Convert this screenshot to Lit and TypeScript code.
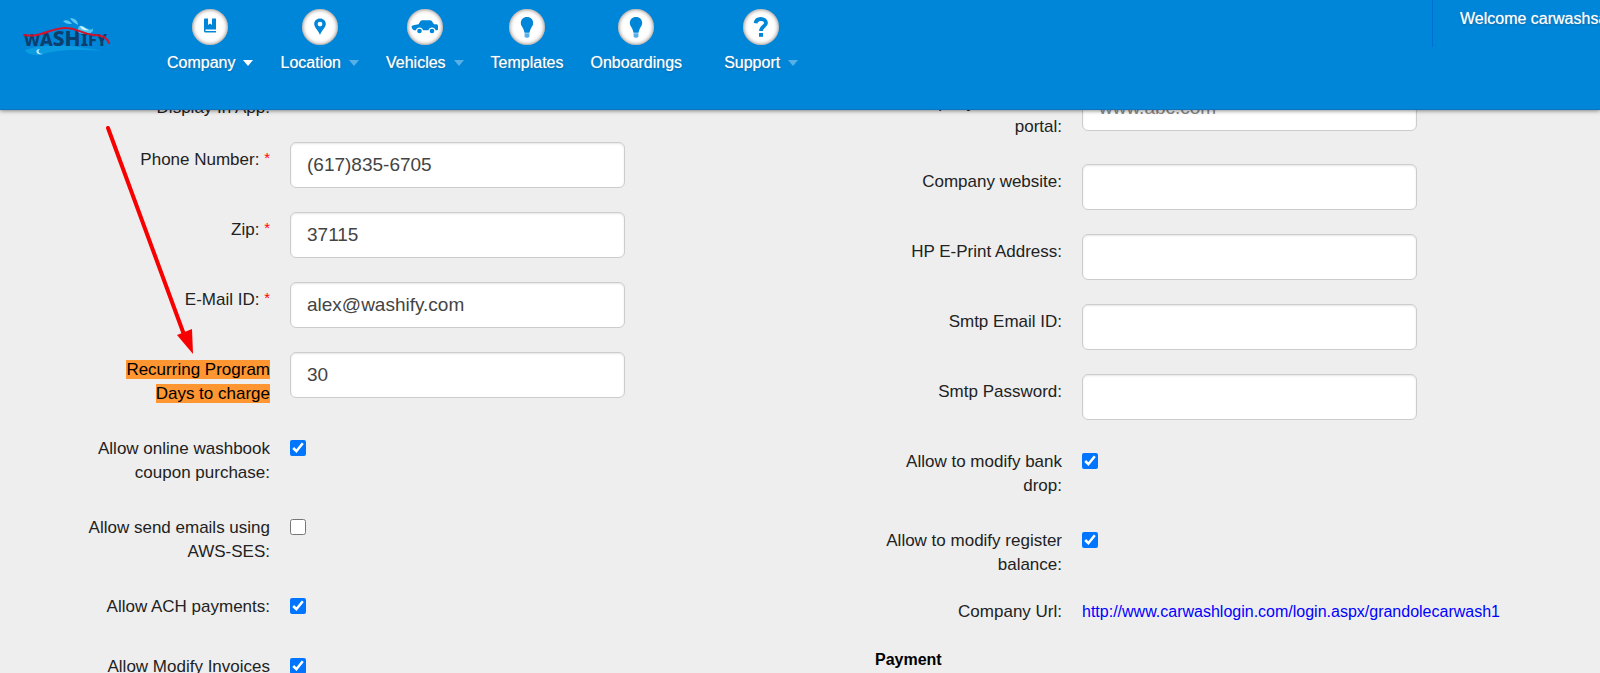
import { LitElement, html, css, svg, nothing } from "lit";
import { customElement } from "lit/decorators.js";

type Row = {
  id: string;
  label: string;
  kind: "text" | "password" | "check" | "link" | "static";
  value?: string;
  placeholder?: string;
  checked?: boolean;
  required?: boolean;
  mark?: boolean;
};

const LEFT: Row[] = [
  { id: "display", label: "Display In App:", kind: "static" },
  { id: "phone", label: "Phone Number:", kind: "text", value: "(617)835-6705", required: true },
  { id: "zip", label: "Zip:", kind: "text", value: "37115", required: true },
  { id: "email", label: "E-Mail ID:", kind: "text", value: "alex@washify.com", required: true },
  { id: "days", label: "Recurring Program Days to charge", kind: "text", value: "30", mark: true },
  { id: "washbook", label: "Allow online washbook coupon purchase:", kind: "check", checked: true },
  { id: "ses", label: "Allow send emails using AWS-SES:", kind: "check" },
  { id: "ach", label: "Allow ACH payments:", kind: "check", checked: true },
  { id: "invoices", label: "Allow Modify Invoices", kind: "check", checked: true },
];

const RIGHT: Row[] = [
  { id: "portal", label: "Company website for portal:", kind: "text", placeholder: "www.abc.com" },
  { id: "website", label: "Company website:", kind: "text" },
  { id: "eprint", label: "HP E-Print Address:", kind: "text" },
  { id: "smtp-id", label: "Smtp Email ID:", kind: "text" },
  { id: "smtp-pw", label: "Smtp Password:", kind: "password" },
  { id: "bank", label: "Allow to modify bank drop:", kind: "check", checked: true },
  { id: "register", label: "Allow to modify register balance:", kind: "check", checked: true },
  { id: "url", label: "Company Url:", kind: "link", value: "http://www.carwashlogin.com/login.aspx/grandolecarwash1" },
];

const bulb = svg`<path d="M18 8c-3.800 0-6.200 2.600-6.200 6 0 2.300 1.200 3.600 2.200 5.200.8 1.300 1.200 2.900 1.500 4.600h5c.3-1.700.7-3.300 1.500-4.600 1-1.600 2.200-2.900 2.200-5.200 0-3.400-2.400-6-6.200-6z"/><path opacity=".65" d="M15.600 24.300h4.800v3.200l-1.200 1.300h-2.400l-1.200-1.300z"/>`;

const NAV = [
  {
    label: "Company",
    caret: "on",
    icon: svg`<path d="M12 10.500q0-1 1-1h3v6.500l2-1.600 2 1.600v-6.500h4v11h-10.500v1.500h10.500v1.500h-10.500q-1.500 0-1.500-1.500z"/>`,
  },
  {
    label: "Location",
    caret: "off",
    icon: svg`<path fill-rule="evenodd" d="M18 9.500c-3.400 0-5.800 2.400-5.800 5.600 0 3.600 4 6 5.800 10.900 1.800-4.900 5.800-7.300 5.800-10.900 0-3.200-2.400-5.600-5.800-5.600zm0 3.200a2.400 2.400 0 1 1 0 4.800 2.400 2.400 0 0 1 0-4.800z"/>`,
  },
  {
    label: "Vehicles",
    caret: "off",
    icon: svg`<path d="M4.500 17.500q.5-1.200 3-1.600l4-.7 2-3.200q.6-.8 1.800-.8h7.700q1.300 0 2 1l2 3h2.500q1.500.3 1.500 1.800v3.300q0 1-1.200 1h-1.300a3.600 3.600 0 0 0-7 0h-5.500a3.600 3.600 0 0 0-7 0h-2q-2.200-.6-2.500-3.800z"/><circle cx="12.500" cy="22" r="2.300"/><circle cx="25" cy="22" r="2.300"/>`,
  },
  { label: "Templates", caret: "", icon: bulb },
  { label: "Onboardings", caret: "", icon: bulb },
  {
    label: "Support",
    caret: "off",
    icon: svg`<path fill="none" stroke="#0086d8" stroke-width="3.800" d="M12.600 14.300c.3-2.900 2.500-4.300 5.200-4.300 3 0 5.200 1.600 5.200 4 0 3.500-4.900 3.300-5 8"/><rect x="16" y="24" width="4" height="3.800"/>`,
  },
];

@customElement("app-root")
export class AppRoot extends LitElement {
  static styles = css`
    :host {
      display: block;
      position: relative;
      height: 100vh;
      overflow: hidden;
      background: #eee;
      color: #222;
      font-family: "Liberation Sans", Arial, sans-serif;
      font-size: 17px;
      line-height: 24px;
    }
    * {
      box-sizing: border-box;
    }
    .header {
      position: absolute;
      inset: 0 0 auto 0;
      z-index: 2;
      display: flex;
      align-items: flex-start;
      height: 110px;
      background: #0086d8;
      border-bottom: 1px solid #0a74c0;
      box-shadow: 0 1px 4px rgba(0, 0, 0, 0.45);
      color: #fff;
      font-size: 16px;
      text-shadow: 0 0 1px rgba(255, 255, 255, 0.6), 0 1px 2px rgba(0, 0, 0, 0.3);
    }
    .logo {
      flex: none;
      margin: 14px 41px 0 20px;
      width: 93px;
      text-shadow: none;
    }
    .nav {
      display: flex;
      flex: 1;
      gap: 1px;
    }
    .item {
      display: flex;
      flex-direction: column;
      align-items: center;
      padding: 9px 13px 0;
      color: inherit;
      text-decoration: none;
    }
    .item:last-child {
      margin-left: 15px;
    }
    .disc {
      width: 36px;
      height: 36px;
      border-radius: 50%;
      background: #fff;
      box-shadow: inset 0 0 4px rgba(60, 40, 30, 0.7);
      fill: #0086d8;
    }
    .disc svg,
    .logo svg {
      display: block;
    }
    .name {
      display: flex;
      align-items: center;
      gap: 8px;
      margin-top: 6px;
    }
    .caret {
      border: 5px solid transparent;
      border-top: 6px solid #fff;
      border-bottom: 0;
    }
    .off {
      opacity: 0.35;
    }
    .user {
      width: 168px;
      height: 47px;
      padding: 7px 0 0 27px;
      border-left: 1px solid #0070d0;
      overflow: hidden;
      white-space: nowrap;
    }
    .main {
      display: grid;
      grid-template-columns: 1fr 1fr;
      padding: 85px 8px 0;
    }
    .col {
      display: flex;
      flex-direction: column;
      gap: 24px;
      padding: 0 2px 0 75px;
    }
    .row {
      display: grid;
      grid-template-columns: 187px minmax(0, 1fr);
      column-gap: 20px;
      align-items: start;
    }
    .label {
      padding: 6px 0 1px;
      text-align: right;
    }
    .static {
      margin-bottom: -2px;
    }
    .static .label {
      padding: 11px 0 0;
    }
    .check {
      min-height: 36px;
    }
    .link {
      margin-top: -8px;
    }
    .req {
      color: #f00;
      font-size: 15px;
      line-height: 1;
      vertical-align: 2px;
    }
    .mark {
      background: #ff9632;
      color: #000;
    }
    .box {
      width: 66%;
      height: 46px;
      padding: 0 16px;
      border: 1px solid #ccc;
      border-radius: 6px;
      background: #fff;
      box-shadow: inset 0 1px 2px rgba(0, 0, 0, 0.1);
      color: #444;
      font: 19px "Liberation Sans", Arial, sans-serif;
    }
    .box::placeholder {
      color: #888;
    }
    .tick {
      width: 16px;
      height: 16px;
      margin: 9px 0 0;
      accent-color: #0075ff;
    }
    .url {
      padding-top: 6px;
      color: #00f;
      font-size: 16px;
      text-decoration: none;
      white-space: nowrap;
    }
    .heading {
      margin: -1px 0 0;
      color: #000;
      font-size: 16px;
      line-height: 24px;
    }
    .arrow {
      position: absolute;
      left: 104px;
      top: 124px;
      z-index: 1;
    }
  `;

  private control(r: Row) {
    switch (r.kind) {
      case "static":
        return nothing;
      case "check":
        return html`<input class="tick" type="checkbox" id=${r.id} .checked=${!!r.checked} />`;
      case "link":
        return html`<a class="url" id=${r.id} href=${r.value!}>${r.value}</a>`;
      default:
        return html`<input class="box" type=${r.kind} id=${r.id} .value=${r.value ?? ""} placeholder=${r.placeholder ?? ""} />`;
    }
  }

  private row(r: Row) {
    const text = r.mark ? html`<span class="mark">${r.label}</span>` : r.label;
    const star = r.required ? html` <span class="req">*</span>` : nothing;
    const label =
      r.kind === "static" || r.kind === "link"
        ? html`<span class="label">${text}</span>`
        : html`<label class="label" for=${r.id}>${text}${star}</label>`;
    return html`<div class="row ${r.kind}">${label}${this.control(r)}</div>`;
  }

  render() {
    return html`
      <header class="header">
        <div class="logo">
          <svg width="93" height="44" viewBox="0 0 93 44" role="img" aria-label="Washify">
            <path fill="#0b9be0" d="M5 36c18-6 40-7 77 1-28-2-48-1-62 4-8 0-14-1-15-5z" />
            <path fill="#bfeaff" d="M20 35c-3 2-1 5 3 5-7 2-9-5-3-5z" />
            <path fill="#5cc8f4" d="M43 7c4-2 7 0 9 3-4 0-6 0-9-3zM50 4c5 0 8 3 8 7-3-2-6-3-8-7z" />
            <text y="32" font-family="Noto Sans, sans-serif" font-weight="800" fill="#0b3f6e"><tspan x="4" font-size="16">W</tspan><tspan font-size="18">A</tspan><tspan font-size="21">SH</tspan><tspan font-size="18">I</tspan><tspan font-size="16">FY</tspan></text>
            <path fill="#4cc4f2" d="M58 18c-1-8 4-7 8-4 4 2 6 2 7 0 1 4-3 6-7 6-3 0-5 0-8-2z" />
            <path fill="#d8f4ff" d="M60 12c3 0 5 3 9 4-4 1-8 0-9-4z" />
            <path fill="none" stroke="#d3122e" stroke-width="2" stroke-linecap="round" d="M4 21c17 3 26-7 41-7 12 0 17 6 29 7 8 0 13 2 15 8" />
          </svg>
        </div>
        <nav class="nav">
          ${NAV.map(
            (n) => html`<a class="item" href="#">
              <span class="disc"><svg width="36" height="36" viewBox="0 0 36 36">${n.icon}</svg></span>
              <span class="name">${n.label}${n.caret ? html`<span class="caret ${n.caret}"></span>` : nothing}</span>
            </a>`
          )}
        </nav>
        <div class="user">Welcome carwashsa</div>
      </header>
      <main class="main">
        <section class="col">${LEFT.map((r) => this.row(r))}</section>
        <section class="col">
          ${RIGHT.map((r) => this.row(r))}
          <h2 class="heading">Payment</h2>
        </section>
      </main>
      <svg class="arrow" width="94" height="232" viewBox="0 0 94 232" aria-hidden="true">
        <path stroke="#f80000" stroke-width="4" stroke-linecap="round" d="M4 4l78 212" />
        <path fill="#f80000" d="M73 211l15-6 1 25z" />
      </svg>
    `;
  }
}
